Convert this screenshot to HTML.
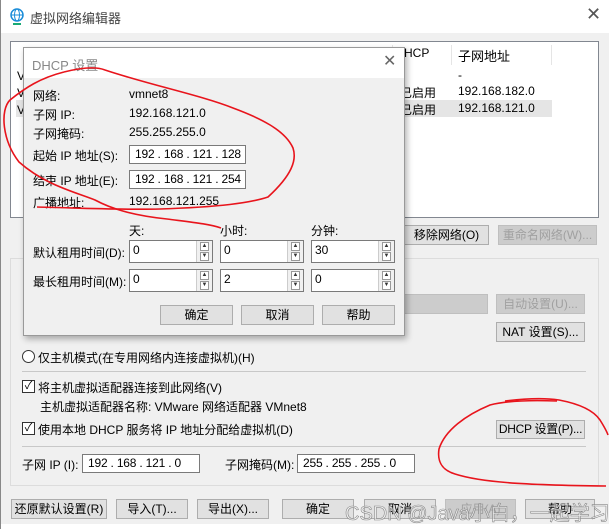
<!DOCTYPE html>
<html><head><meta charset="utf-8">
<style>
*{box-sizing:border-box;margin:0;padding:0}
body{width:609px;height:529px;overflow:hidden;background:#f0f0f0;font-family:"Liberation Sans","Noto Sans CJK SC",sans-serif;font-size:12px;color:#000;position:relative}
.a{position:absolute;white-space:nowrap}
.btn{position:absolute;background:#e1e1e1;border:1px solid #adadad;text-align:center;font-size:12px;white-space:nowrap;overflow:hidden}
.dis{color:#a0a0a0;background:#cccccc;border-color:#bfbfbf}
.inp{position:absolute;background:#fff;border:1px solid #7a7a7a;font-size:12px;padding-left:5px;white-space:nowrap;overflow:hidden;letter-spacing:-0.2px}
.spin{position:absolute;background:#fff;border:1px solid #7a7a7a;font-size:12px;padding-left:3px}
.spin .s{position:absolute;right:0;top:0;width:16px;height:100%;border-left:1px solid #ccc;background:#f0f0f0}
.spin .s i{position:absolute;left:3px;width:9px;height:9px;border:1px solid #999;background:#fff;font-style:normal;font-size:6px;line-height:7px;text-align:center;color:#333}
.cb{position:absolute;width:13px;height:13px;border:1px solid #333;background:#fff;font-size:11px;line-height:11px;text-align:center}
</style></head><body>
<div class="a" style="left:0;top:0;width:609px;height:33px;background:#fff"></div>
<svg class="a" style="left:9px;top:8px" width="16" height="18" viewBox="0 0 16 18"><circle cx="8" cy="7" r="6" fill="none" stroke="#1a8cd8" stroke-width="1.5"/><ellipse cx="8" cy="7" rx="2.5" ry="6" fill="none" stroke="#1a8cd8"/><line x1="2" y1="7" x2="14" y2="7" stroke="#1a8cd8"/><line x1="4" y1="16" x2="12" y2="16" stroke="#19a974" stroke-width="2"/></svg>
<div class="a" style="left:30px;top:8px;font-size:13px;color:#444">虚拟网络编辑器</div>
<div class="a" style="left:586px;top:4px;font-size:18px;color:#555">✕</div>
<div class="a" style="left:10px;top:41px;width:589px;height:177px;background:#fff;border:1px solid #828790"></div>
<div class="a" style="left:392px;top:45px;width:1px;height:20px;background:#e5e5e5"></div>
<div class="a" style="left:451px;top:45px;width:1px;height:20px;background:#e5e5e5"></div>
<div class="a" style="left:551px;top:45px;width:1px;height:20px;background:#e5e5e5"></div>
<div class="a" style="left:404px;top:46px">HCP</div>
<div class="a" style="left:458px;top:46px;font-size:13px">子网地址</div>
<div class="a" style="left:458px;top:68px">-</div>
<div class="a" style="left:16px;top:100px;width:536px;height:17px;background:#e5e5e5"></div>
<div class="a" style="left:400px;top:84px">已启用</div><div class="a" style="left:458px;top:84px">192.168.182.0</div>
<div class="a" style="left:400px;top:101px">已启用</div><div class="a" style="left:458px;top:101px">192.168.121.0</div>
<div class="a" style="left:17px;top:69px">V</div><div class="a" style="left:17px;top:86px">V</div><div class="a" style="left:17px;top:103px">V</div>
<div class="btn" style="left:404px;top:225px;width:85px;height:20px;line-height:18px">移除网络(O)</div>
<div class="btn dis" style="left:498px;top:225px;width:99px;height:20px;line-height:18px">重命名网络(W)...</div>
<div class="a" style="left:10px;top:258px;width:589px;height:228px;border:1px solid #dcdcdc"></div>
<div class="a" style="left:404px;top:294px;width:84px;height:20px;background:#cccccc;border:1px solid #bfbfbf"></div>
<div class="btn dis" style="left:496px;top:294px;width:89px;height:20px;line-height:18px">自动设置(U)...</div>
<div class="btn" style="left:496px;top:322px;width:89px;height:20px;line-height:18px">NAT 设置(S)...</div>
<div class="a" style="left:22px;top:350px;width:13px;height:13px;border:1px solid #333;border-radius:50%;background:#fff"></div>
<div class="a" style="left:38px;top:349px">仅主机模式(在专用网络内连接虚拟机)(H)</div>
<div class="a" style="left:22px;top:371px;width:564px;height:1px;background:#c8c8c8"></div>
<div class="cb" style="left:22px;top:380px">✓</div>
<div class="a" style="left:38px;top:379px">将主机虚拟适配器连接到此网络(V)</div>
<div class="a" style="left:40px;top:398px">主机虚拟适配器名称: VMware 网络适配器 VMnet8</div>
<div class="cb" style="left:22px;top:422px">✓</div>
<div class="a" style="left:38px;top:421px">使用本地 DHCP 服务将 IP 地址分配给虚拟机(D)</div>
<div class="btn" style="left:496px;top:420px;width:89px;height:19px;line-height:17px;letter-spacing:-0.3px">DHCP 设置(P)...</div>
<div class="a" style="left:22px;top:446px;width:564px;height:1px;background:#c8c8c8"></div>
<div class="a" style="left:22px;top:456px">子网 IP (I):</div>
<div class="inp" style="left:82px;top:454px;width:118px;height:19px;line-height:17px">192 . 168 . 121 .  0</div>
<div class="a" style="left:225px;top:456px">子网掩码(M):</div>
<div class="inp" style="left:297px;top:454px;width:118px;height:19px;line-height:17px">255 . 255 . 255 .  0</div>
<div class="btn" style="left:11px;top:499px;width:96px;height:20px;line-height:18px">还原默认设置(R)</div>
<div class="btn" style="left:116px;top:499px;width:72px;height:20px;line-height:18px">导入(T)...</div>
<div class="btn" style="left:197px;top:499px;width:72px;height:20px;line-height:18px">导出(X)...</div>
<div class="btn" style="left:282px;top:499px;width:72px;height:20px;line-height:18px">确定</div>
<div class="btn" style="left:364px;top:499px;width:72px;height:20px;line-height:18px">取消</div>
<div class="btn dis" style="left:445px;top:499px;width:71px;height:20px;line-height:18px">应用(A)</div>
<div class="btn" style="left:525px;top:499px;width:70px;height:20px;line-height:18px">帮助</div>
<div class="a" style="left:0;top:524px;width:609px;height:5px;background:#fff"></div>
<div class="a" style="left:0;top:0;width:1px;height:529px;background:#888"></div>
<div class="a" style="left:23px;top:47px;width:382px;height:289px;background:#f0f0f0;border:1px solid #999;box-shadow:2px 3px 6px rgba(0,0,0,.3)"></div>
<div class="a" style="left:24px;top:48px;width:380px;height:30px;background:#fff"></div>
<div class="a" style="left:32px;top:55px;font-size:13px;color:#888">DHCP 设置</div>
<div class="a" style="left:383px;top:51px;font-size:16px;color:#666">✕</div>
<div class="a" style="left:33px;top:87px">网络:</div><div class="a" style="left:129px;top:87px">vmnet8</div>
<div class="a" style="left:33px;top:106px">子网 IP:</div><div class="a" style="left:129px;top:106px">192.168.121.0</div>
<div class="a" style="left:33px;top:125px">子网掩码:</div><div class="a" style="left:129px;top:125px">255.255.255.0</div>
<div class="a" style="left:33px;top:147px">起始 IP 地址(S):</div>
<div class="inp" style="left:129px;top:145px;width:117px;height:19px;line-height:17px">192 . 168 . 121 . 128</div>
<div class="a" style="left:33px;top:172px">结束 IP 地址(E):</div>
<div class="inp" style="left:129px;top:170px;width:117px;height:19px;line-height:17px">192 . 168 . 121 . 254</div>
<div class="a" style="left:33px;top:194px">广播地址:</div><div class="a" style="left:129px;top:194px">192.168.121.255</div>
<div class="a" style="left:129px;top:222px">天:</div><div class="a" style="left:220px;top:222px">小时:</div><div class="a" style="left:311px;top:222px">分钟:</div>
<div class="a" style="left:33px;top:244px">默认租用时间(D):</div>
<div class="a" style="left:33px;top:273px">最长租用时间(M):</div>
<div class="spin" style="left:129px;top:240px;width:84px;height:23px;line-height:19px">0<div class="s"><i style="top:1px">▲</i><i style="top:11px">▼</i></div></div>
<div class="spin" style="left:220px;top:240px;width:84px;height:23px;line-height:19px">0<div class="s"><i style="top:1px">▲</i><i style="top:11px">▼</i></div></div>
<div class="spin" style="left:311px;top:240px;width:84px;height:23px;line-height:19px">30<div class="s"><i style="top:1px">▲</i><i style="top:11px">▼</i></div></div>
<div class="spin" style="left:129px;top:269px;width:84px;height:23px;line-height:19px">0<div class="s"><i style="top:1px">▲</i><i style="top:11px">▼</i></div></div>
<div class="spin" style="left:220px;top:269px;width:84px;height:23px;line-height:19px">2<div class="s"><i style="top:1px">▲</i><i style="top:11px">▼</i></div></div>
<div class="spin" style="left:311px;top:269px;width:84px;height:23px;line-height:19px">0<div class="s"><i style="top:1px">▲</i><i style="top:11px">▼</i></div></div>
<div class="btn" style="left:160px;top:305px;width:73px;height:20px;line-height:18px">确定</div>
<div class="btn" style="left:241px;top:305px;width:73px;height:20px;line-height:18px">取消</div>
<div class="btn" style="left:322px;top:305px;width:73px;height:20px;line-height:18px">帮助</div>
<div class="a" style="left:345px;top:497px;font-size:20px;color:rgba(255,255,255,.55);-webkit-text-stroke:0.6px #888">CSDN @Java小白，一起学习</div>
<svg class="a" style="left:0;top:0" width="609" height="529" viewBox="0 0 609 529" fill="none" stroke="#e8141c" stroke-width="1.6">
<path d="M64 72 C80 68 95 66 105 70 C150 85 200 95 233 108 C260 118 285 130 293 148 C297 160 292 175 268 197 C250 203 220 207 160 209 C120 210 80 208 37 207"/>
<path d="M64 72 C40 78 25 88 10 100 C0 110 2 140 19 162 C45 185 75 192 95 200 C110 208 130 215 167 219 C190 222 210 224 221 228"/>
<path d="M557 401 C530 400 505 401 490 405 C466 415 445 430 439 449 C437 462 442 470 455 474 C480 482 520 485 606 486"/>
<path d="M505 401 C530 398 545 398 559 400 C580 404 594 411 600 420 C605 428 607 432 608 435"/>
</svg>
</body></html>
